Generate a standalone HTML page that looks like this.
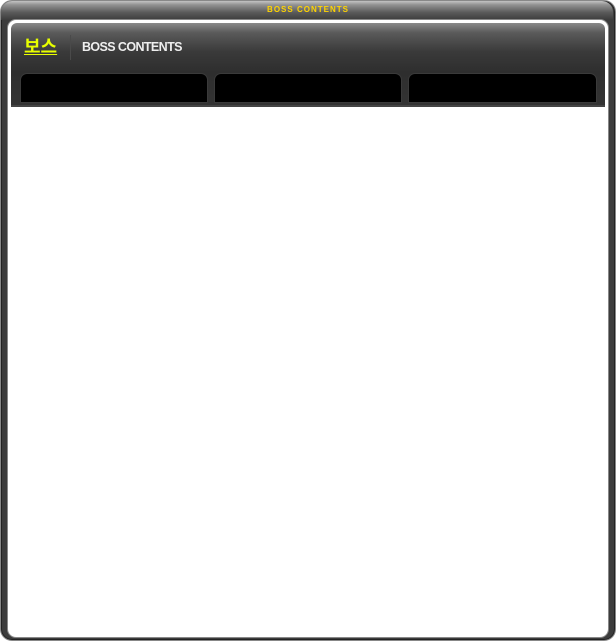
<!DOCTYPE html>
<html><head><meta charset="utf-8"><style>
*{margin:0;padding:0;box-sizing:border-box}
body{width:616px;height:641px;background:#fff;position:relative;overflow:hidden;font-family:"Liberation Sans","Noto Sans CJK KR",sans-serif}
.outer{position:absolute;left:0;top:0;width:616px;height:641px;border-radius:12px;background:#3c3c3c;border:1px solid #888;box-shadow:inset 0 0 0 1px #222}
.titlebar{position:absolute;left:1px;top:1px;width:612px;height:19px;border-radius:11px 11px 0 0;background:linear-gradient(#c4c4c4 0,#929292 20%,#5a5a5a 60%,#3c3c3c 100%)}
.title{position:absolute;top:5px;left:0;width:616px;text-align:center;font-size:8px;font-weight:bold;color:#ffd400;letter-spacing:1px}
.inner{position:absolute;left:8px;top:20px;width:600px;height:617px;border:2px solid #fff;border-radius:8px;background:#fff;box-shadow:0 0 0 1px #888}
.head{position:absolute;left:11px;top:23px;width:594px;height:84px;border-radius:6px 6px 0 0;background:linear-gradient(#8a8a8a 0,#5a5a5a 12%,#3a3a3a 35%,#2e2e2e 60%,#333 100%);border-bottom:2px solid #444}
.ko{position:absolute;left:24px;top:33px;font-size:18px;font-weight:bold;color:#e8ff00;text-decoration:underline}
.sep{position:absolute;left:70px;top:35px;width:1px;height:25px;background:#222;border-right:1px solid #4a4a4a}
.en{position:absolute;left:82px;top:40px;font-size:12.5px;font-weight:bold;color:#eee;letter-spacing:-0.6px}
.tab{position:absolute;top:74px;height:28px;background:#000;border-radius:6px 6px 0 0;box-shadow:0 0 0 1px #3a3a3a}
</style></head><body>
<div class="outer"></div>
<div class="titlebar"></div>
<div class="title">BOSS CONTENTS</div>
<div class="inner"></div>
<div class="head"></div>
<div class="ko">보스</div>
<div class="sep"></div>
<div class="en">BOSS CONTENTS</div>
<div class="tab" style="left:21px;width:186px"></div>
<div class="tab" style="left:215px;width:186px"></div>
<div class="tab" style="left:409px;width:187px"></div>
</body></html>
